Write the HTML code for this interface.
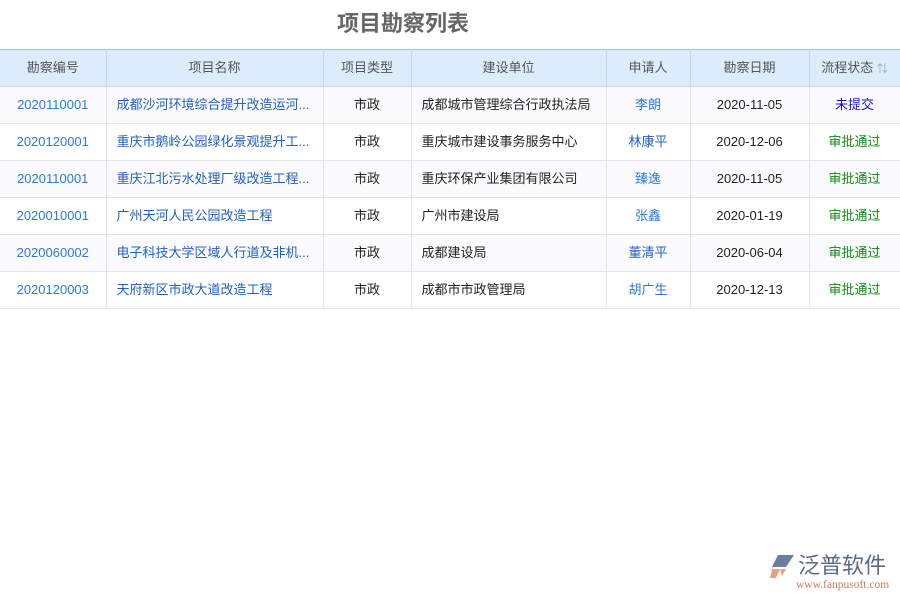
<!DOCTYPE html>
<html><head><meta charset="utf-8"><style>
body{margin:0;width:900px;height:600px;background:#fff;font-family:"Liberation Sans","Noto Sans CJK SC",sans-serif;position:relative;overflow:hidden}
h1{position:absolute;left:0;top:10px;width:806px;text-align:center;margin:0;font-size:22px;font-weight:bold;color:#666;line-height:28px}
table{position:absolute;top:49px;left:0;border-collapse:collapse;table-layout:fixed;width:900px;font-size:13px}
th,td{padding:0;height:36px;line-height:16px}
th{background:#ddecfb;color:#555;font-weight:normal;border:1px solid #c4d8ee;border-top:1px solid #9cc0e6}
td{border:1px solid #e4e4e4;color:#222;white-space:nowrap;overflow:hidden}
tr:nth-child(even) td{background:#fbfbfd}
td:first-child,th:first-child{border-left:none}
.c{text-align:center}.l{padding-left:10px}
.b{color:#2a7ad8}.p{color:#2060c0}.g{color:#128a12}.u{color:#1a10d0}
</style></head><body>
<h1>项目勘察列表</h1>
<table>
<colgroup><col style="width:106px"><col style="width:217px"><col style="width:88px"><col style="width:195px"><col style="width:84px"><col style="width:119px"><col style="width:91px"></colgroup>
<tr><th>勘察编号</th><th>项目名称</th><th>项目类型</th><th>建设单位</th><th>申请人</th><th>勘察日期</th><th>流程状态 <span style="color:#9ab;font-size:11px">⇅</span></th></tr>
<tr><td class="c b">2020110001</td><td class="l p">成都沙河环境综合提升改造运河...</td><td class="c">市政</td><td class="l">成都城市管理综合行政执法局</td><td class="c b">李朗</td><td class="c">2020-11-05</td><td class="c u">未提交</td></tr>
<tr><td class="c b">2020120001</td><td class="l p">重庆市鹅岭公园绿化景观提升工...</td><td class="c">市政</td><td class="l">重庆城市建设事务服务中心</td><td class="c p">林康平</td><td class="c">2020-12-06</td><td class="c g">审批通过</td></tr>
<tr><td class="c b">2020110001</td><td class="l p">重庆江北污水处理厂级改造工程...</td><td class="c">市政</td><td class="l">重庆环保产业集团有限公司</td><td class="c b">臻逸</td><td class="c">2020-11-05</td><td class="c g">审批通过</td></tr>
<tr><td class="c b">2020010001</td><td class="l p">广州天河人民公园改造工程</td><td class="c">市政</td><td class="l">广州市建设局</td><td class="c b">张鑫</td><td class="c">2020-01-19</td><td class="c g">审批通过</td></tr>
<tr><td class="c b">2020060002</td><td class="l p">电子科技大学区域人行道及非机...</td><td class="c">市政</td><td class="l">成都建设局</td><td class="c p">董清平</td><td class="c">2020-06-04</td><td class="c g">审批通过</td></tr>
<tr><td class="c b">2020120003</td><td class="l p">天府新区市政大道改造工程</td><td class="c">市政</td><td class="l">成都市市政管理局</td><td class="c b">胡广生</td><td class="c">2020-12-13</td><td class="c g">审批通过</td></tr>
</table>
<div style="position:absolute;left:768px;top:554px;width:30px;height:26px">
<svg width="30" height="26" viewBox="0 0 30 26"><path d="M10 1H26L18 13H4Z" fill="#6a7ea0"/><path d="M4 15L12 15L8 24H2Z" fill="#e8a080"/><path d="M12 15L18 15L14 22Z" fill="#e8a080"/></svg></div>
<div style="position:absolute;left:798px;top:553px;font-size:22px;color:#5a6a88;letter-spacing:0;line-height:26px">泛普软件</div>
<div style="position:absolute;left:796px;top:578px;font-size:11.5px;color:#d07a5a;font-family:'Liberation Serif',serif;line-height:14px">www.fanpusoft.com</div>
</body></html>
